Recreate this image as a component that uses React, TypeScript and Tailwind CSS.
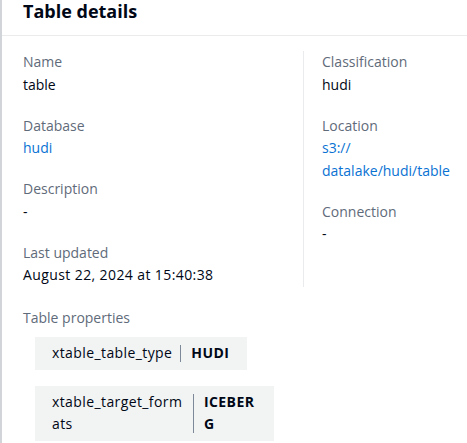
const font = { fontFamily: '"Open Sans", "Noto Sans", sans-serif' };

function Field({ label, children }: { label: string; children: React.ReactNode }) {
  return (
    <div className="flex flex-col">
      <div className="text-[14px] leading-[22.5px] text-[#5f6b7a]">{label}</div>
      <div className="text-[14px] leading-[22.5px] text-[#000716]">{children}</div>
    </div>
  );
}

function Link({ children }: { children: React.ReactNode }) {
  return <a className="text-[#0972d3]">{children}</a>;
}

function Prop({ name, value }: { name: string; value: string }) {
  return (
    <div className="flex w-fit items-stretch bg-[#f2f3f3] py-[5px] pl-[17px] pr-[18px] text-[14px] leading-[22.5px] tracking-[0.4px] text-[#000716]">
      <span className="max-w-[141px] break-all pr-2">{name}</span>
      <span className="my-[3px] w-px bg-[#7d8998]" />
      <span className="max-w-[62px] break-all pl-[10px] font-bold">{value}</span>
    </div>
  );
}

export default function App() {
  return (
    <div className="min-h-screen w-[467px] overflow-hidden border-l-2 border-[#d1d5d9] bg-white" style={font}>
      <div className="border-b border-[#e9ebed] pb-[13px] pl-[21px]">
        <h2 className="text-[18px] font-bold leading-[22px] text-[#000716]">Table details</h2>
      </div>
      <div className="pl-[21px] pt-[15px]">
        <div className="grid grid-cols-[280px_1fr]">
          <div className="flex flex-col gap-[18.5px]">
            <Field label="Name">table</Field>
            <Field label="Database">
              <Link>hudi</Link>
            </Field>
            <Field label="Description">-</Field>
            <Field label="Last updated">
              <span className="tracking-[0.4px]">August 22, 2024 at 15:40:38</span>
            </Field>
          </div>
          <div className="flex flex-col gap-[18.5px] border-l border-[#e9ebed] pl-[18px]">
            <Field label="Classification">hudi</Field>
            <Field label="Location">
              <Link>
                s3://
                <br />
                datalake/hudi/table
              </Link>
            </Field>
            <Field label="Connection">-</Field>
          </div>
        </div>
        <div className="mt-[20px] text-[14px] leading-[22.5px] text-[#5f6b7a]">Table properties</div>
        <div className="ml-3 mt-[8px] flex flex-col gap-4">
          <Prop name="xtable_table_type" value="HUDI" />
          <Prop name="xtable_target_formats" value="ICEBERG" />
        </div>
      </div>
    </div>
  );
}
